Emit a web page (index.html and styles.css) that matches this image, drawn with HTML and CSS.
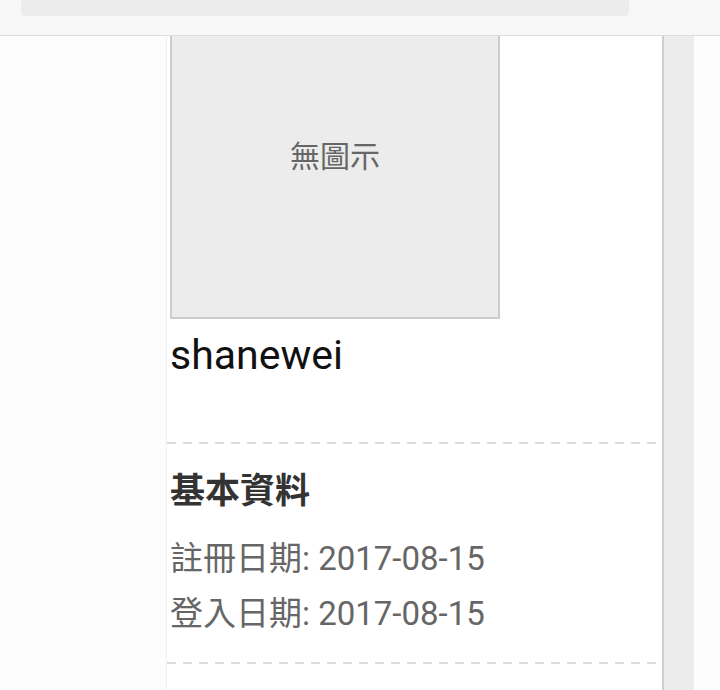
FILE: index.html
```html
<!DOCTYPE html>
<html lang="zh-Hant">
<head>
    <meta charset="UTF-8">
    <meta name="viewport" content="width=device-width, initial-scale=1.0">
    <title>shanewei</title>
    <link rel="stylesheet" href="styles.css">
</head>
<body>
    <div class="top-bar">
        <div class="search-box"></div>
    </div>

    <div class="page">
        <div class="gutter"></div>

        <div class="profile-card">
            <div class="avatar">無圖示</div>
            <div class="user-name">shanewei</div>

            <div class="divider"></div>

            <div class="info-section">
                <h3>基本資料</h3>
                <p>註冊日期: 2017-08-15</p>
                <p>登入日期: 2017-08-15</p>
            </div>

            <div class="divider"></div>
        </div>

        <div class="side-strip"></div>
    </div>
</body>
</html>
```

FILE: styles.css
```css
body {
    font-family: Roboto, 'Noto Sans CJK TC', sans-serif;
    margin: 0;
    padding: 0;
    background: #fdfdfd;
    overflow: hidden;
}

.top-bar {
    position: fixed;
    top: 0;
    left: 0;
    right: 0;
    height: 35px;
    background: #f8f8f8;
    border-bottom: 1px solid #dcdcdc;
    z-index: 10;
}

.search-box {
    margin: 0 91px 0 21px;
    height: 16px;
    background: #ececec;
    border-radius: 0 0 4px 4px;
}

.page {
    display: flex;
    margin-top: -11px;
    min-height: 720px;
}

.gutter {
    width: 166px;
}

.profile-card {
    width: 492px;
    padding-left: 3px;
    border-left: 1px solid #f0f0f0;
    border-right: 2px solid #cfcfcf;
    background: #fff;
}

.avatar {
    width: 326px;
    height: 326px;
    border: 2px solid #cccccc;
    background: #ececec;
    color: #666;
    font-size: 30px;
    display: flex;
    align-items: center;
    justify-content: center;
}

.user-name {
    font-size: 41px;
    color: #111;
    margin-top: 13px;
    line-height: 46px;
    height: 110px;
}

.divider {
    height: 2px;
    margin-left: -3px;
    background: repeating-linear-gradient(to right, #dddddd 0 9px, transparent 9px 16px);
}

.info-section {
    padding: 26px 0 21px 0;
}

.info-section h3 {
    margin: 0 0 17px 0;
    font-size: 35px;
    line-height: 44px;
    font-weight: bold;
    color: #333;
}

.info-section p {
    margin: 0;
    font-size: 33px;
    line-height: 55px;
    color: #666;
}

.side-strip {
    width: 30px;
    background: #ececec;
}
```
